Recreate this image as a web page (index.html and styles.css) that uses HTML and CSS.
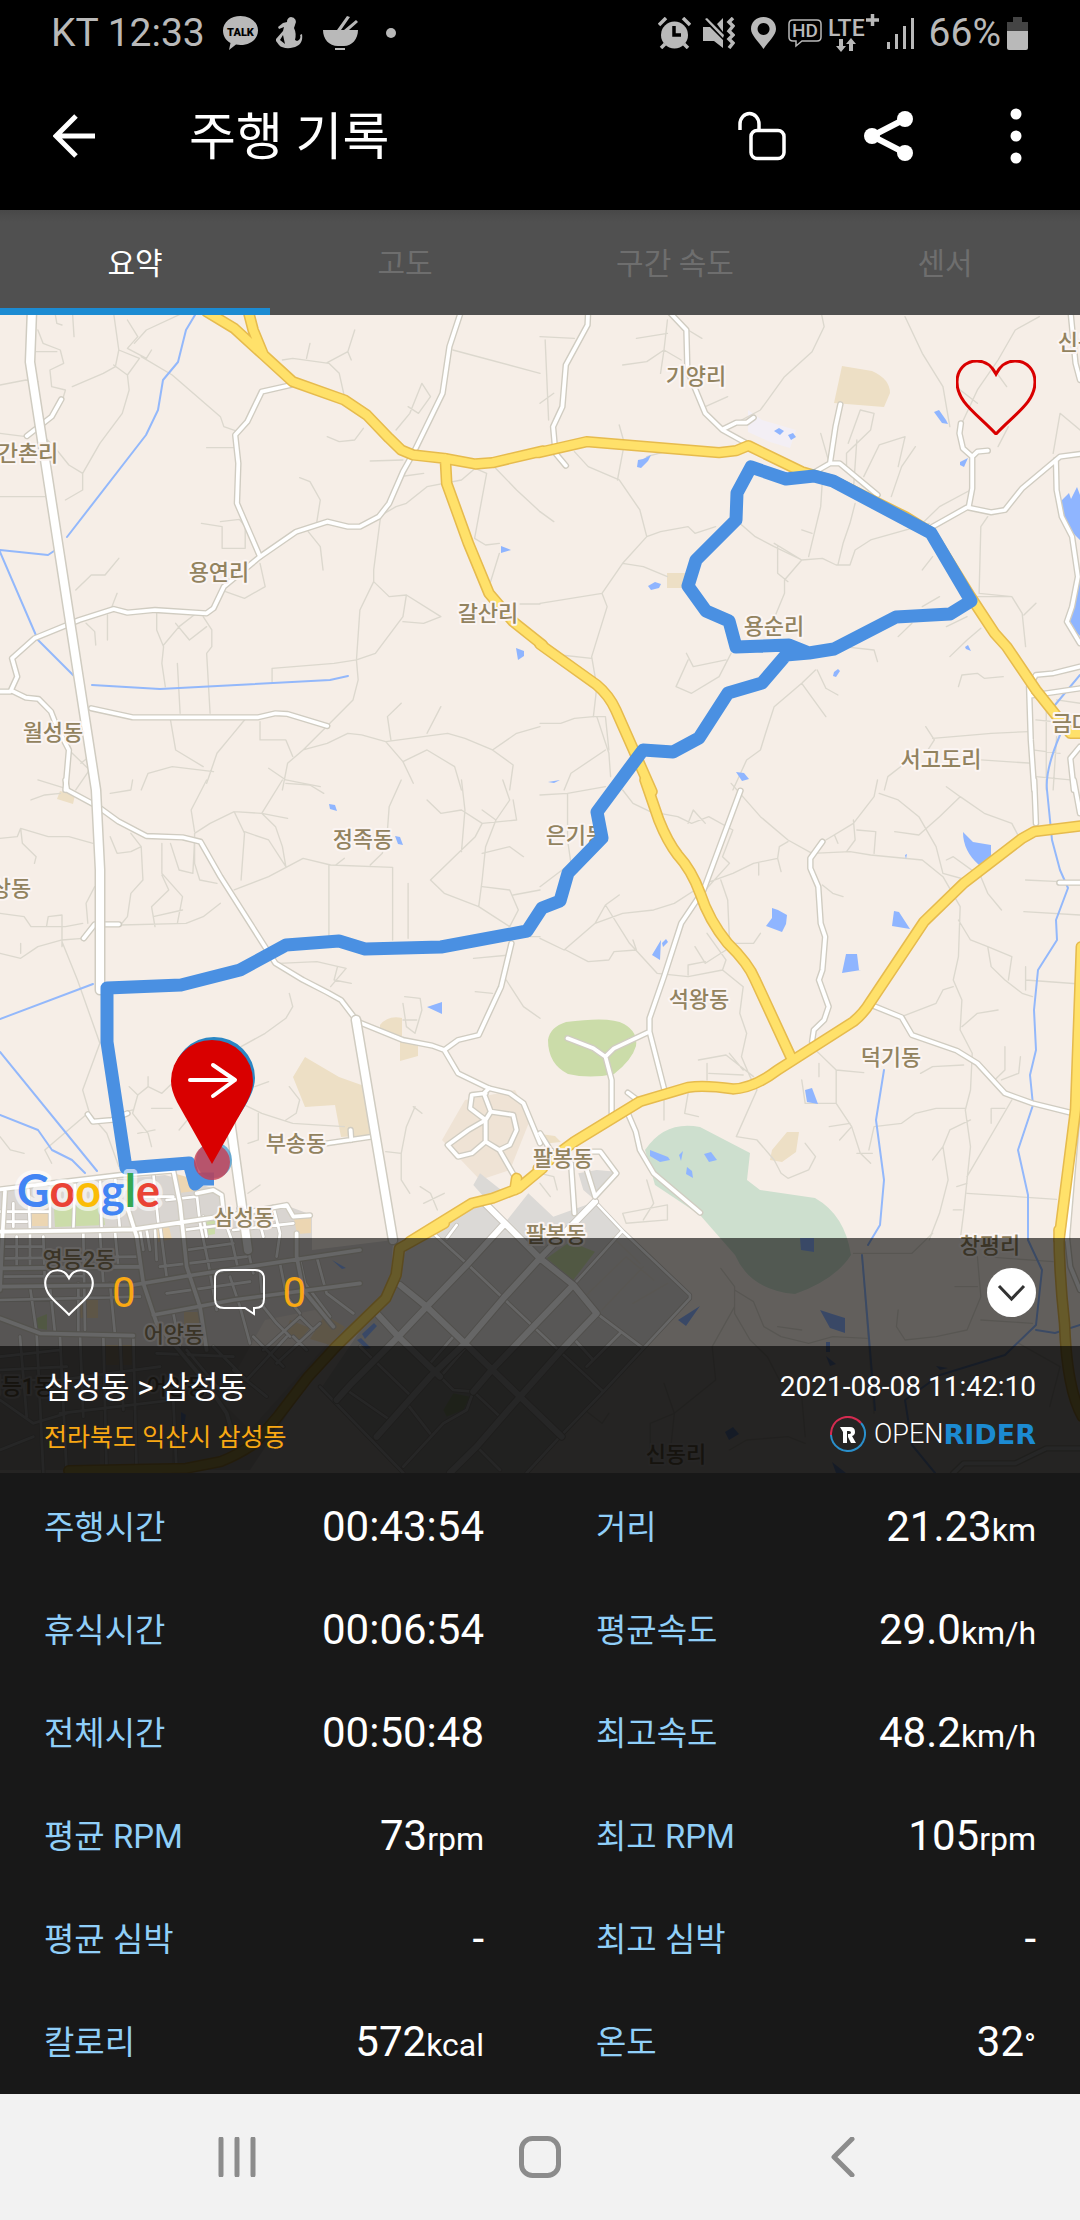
FILE: index.html
```html
<!DOCTYPE html>
<html lang="ko">
  <head>
    <meta charset="UTF-8" />
    <meta name="viewport" content="width=device-width, initial-scale=1.0" />
    <title>주행 기록</title>
    <link rel="stylesheet" href="styles.css">
  </head>
  <body>
    <div class="status-bar">
      <div class="status-left">
        <span class="clock">KT 12:33</span>
        <svg class="icon-talk" width="35" height="34" viewBox="0 0 35 34">
          <path d="M17.500 0C27 0 35 6 35 14.500S27 29 17.500 29L13 28.600 6 34 7.500 27C3 24.500 0 20 0 14.500 0 6 8 0 17.500 0z" />
          <text x="17.500" y="19.500">TALK</text>
        </svg>
        <svg class="icon-rider" width="28" height="32" viewBox="0 0 28 32">
          <path d="M15 0a5 5 0 0 1 4 8l-1 3c2 4 2 8 1 12l2 1c3-1 4-4 3-6l2-1c1 6-1 10-5 12-5 3-15 3-18-1l-3-4v-2l7-8 1-4-5 2-1-2 5-4 4-1A5 5 0 0 1 15 0zM7 18l-3 5 5 4z" />
        </svg>
        <svg class="icon-bowl" width="35" height="34" viewBox="0 0 35 34">
          <path d="M0 14h14L24 0l3 1-9 13h3L33 4l2 2-9 8h9c0 9-6 16-14 16H15C6 30 0 23 0 14zM12 32h10v2H12z" />
        </svg>
        <span class="dot"></span>
      </div>
      <div class="status-right">
        <svg width="33" height="32" viewBox="0 0 33 32">
          <circle cx="16.500" cy="18" r="13.500" />
          <path d="M1 8l7-7M32 8l-7-7M3 31l4-4M30 31l-4-4" class="thick" />
          <path d="M16 9v9h7" class="cut" />
        </svg>
        <svg width="32" height="32" viewBox="0 0 32 32">
          <path d="M0 10h7l13 13v8l-9-7H0zM14 7l6-6v14zM2 2l2-1 17 17-1 3z" />
          <path d="M30 1l-4 4 4 4-4 5 4 4-4 4 4 4-4 5" class="thick" />
        </svg>
        <svg width="25" height="32" viewBox="0 0 25 32">
          <path fill-rule="evenodd" d="M12.500 0C20 0 25 5 25 12 25 18 18 24 12.500 32 7 24 0 18 0 12 0 5 5 0 12.500 0zm0 6a6 6 0 1 0 .1 0z" />
        </svg>
        <svg width="34" height="30" viewBox="0 0 34 30">
          <path d="M5 2h24q4 0 4 4v13q0 4-4 4H14l-6 5v-5H5q-4 0-4-4V6q0-4 4-4z" class="thin" />
          <text x="17" y="19" class="hd">HD</text>
        </svg>
        <svg width="51" height="38" viewBox="0 0 51 38">
          <text x="0" y="22" class="lte">LTE</text>
          <path d="M38 6h13M44.500 0v12" class="thick" />
          <path d="M11 25h4v7h3l-5 6-5-6h3zM21 37h4v-7h3l-5-6-5 6h3z" />
        </svg>
        <svg width="28" height="31" viewBox="0 0 28 31">
          <path d="M0 24h3v7H0zM8 16h3v15H8zM16 8h3v23h-3zM24 0h3v31h-3z" />
        </svg>
        <span class="percent">66%</span>
        <svg width="21" height="33" viewBox="0 0 21 33">
          <path d="M0 5h6V0h9v5h6v9H0z" class="battery-empty" />
          <path d="M0 14h21v17q0 2-2 2H2q-2 0-2-2z" />
        </svg>
      </div>
    </div>

    <header class="toolbar">
      <button class="icon-button back" aria-label="뒤로">
        <svg width="42" height="44" viewBox="0 0 42 44">
          <path d="M42 22H4M23 2L3 22l20 20" />
        </svg>
      </button>
      <h1>주행 기록</h1>
      <button class="icon-button lock" aria-label="공개 설정">
        <svg width="48" height="50" viewBox="0 0 48 50">
          <rect x="13" y="19.500" width="33" height="28" rx="6" />
          <path d="M2 19v-6a9.500 10.500 0 0 1 19 0v6" />
        </svg>
      </button>
      <button class="icon-button share" aria-label="공유">
        <svg width="50" height="50" viewBox="0 0 50 50">
          <path d="M41 8L8 25l33 17" />
          <circle cx="41" cy="8" r="8" />
          <circle cx="8" cy="25" r="8" />
          <circle cx="41" cy="42" r="8" />
        </svg>
      </button>
      <button class="icon-button more" aria-label="더보기">
        <svg width="12" height="56" viewBox="0 0 12 56">
          <circle cx="6" cy="6" r="5.500" />
          <circle cx="6" cy="28" r="5.500" />
          <circle cx="6" cy="50" r="5.500" />
        </svg>
      </button>
    </header>

    <nav class="tabs">
      <button class="tab active">요약</button>
      <button class="tab">고도</button>
      <button class="tab">구간 속도</button>
      <button class="tab">센서</button>
    </nav>

    <main class="map">
      <svg class="map-canvas" viewBox="0 315 1080 1158" preserveAspectRatio="xMidYMid slice">
        <defs>
          <!-- white roads, one group per map tile -->
          <g id="roads">
            <g transform="translate(0 310) scale(.3444 .3333)">
              <path d="M78 378L150 320 178 268M845 225L760 245 718 335 683 375 692 460 688 580 755 740" />
              <path d="M1340 0L1305 110 1285 250 1200 430 1170 485 1130 580 1100 620 1045 650 1010 650 950 635 860 665 755 740 650 830 620 895 600 910 450 900 370 908 330 897 230 930 100 985 35 1045 50 1100 30 1145 0 1145" />
              <path d="M35 1143L75 1163 112 1167 148 1205 165 1250 200 1320 190 1440M265 1195L385 1222 750 1222 800 1210 835 1212 950 1248" />
            </g>
            <g transform="translate(540 310) scale(.3444 .3333)">
              <path d="M140 0L138 45 75 165 65 290 38 350 45 430 75 467M370 0L425 60 428 180 480 310 530 360 600 400M530 358L570 338 600 338 620 323" />
              <path d="M872 283L858 350 842 460 800 485M842 460L870 460 980 555M1222 340L1218 370 1228 415 1255 440 1270 425 1300 422M1255 440L1255 535 1245 590M1140 650L1240 592 1310 607 1350 600 1400 535 1510 440 1568 432M1498 450L1500 540 1515 620 1545 680 1562 800 1545 890 1530 935 1568 1000" />
              <path d="M1568 1070L1490 1090 1440 1095 1420 1130 1425 1290 1435 1440M1425 1157L1568 1135M1568 1310L1540 1345 1550 1440M1540 0L1555 160 1568 210" />
            </g>
            <g transform="translate(0 780) scale(.3444 .3333)">
              <path d="M190 0L195 30 285 80 345 125 425 168 530 172 582 185 640 290 800 550 880 600 950 637 990 660 1038 725 1170 780 1255 797 1290 810 1330 880 1420 925 1480 940 1520 970 1568 1090M1485 490L1455 620 1390 765 1330 780 1290 810" />
              <path d="M345 433L275 433 243 475M255 1003L270 1025 325 1020 370 1000M950 1090L1095 1068M1018 1050L1020 1080M1420 925L1405 940 1425 995M1425 995L1490 1005 1500 1050 1480 1095 1450 1110 1410 1085 1410 1020 1425 995M1410 940L1370 945 1365 985 1410 1020 1360 1050 1300 1095 1330 1130 1370 1120 1410 1085M1450 1110L1500 1200" />
            </g>
            <g transform="translate(540 780) scale(.3444 .3333)">
              <path d="M582 32L475 330 410 430 360 590 318 715 318 755 360 925M318 755L215 805 190 830 155 805 80 775M190 830L208 900 208 1010M820 185L785 235 785 265 808 320 815 430 828 470 820 570 810 600 838 680 825 720 795 750 790 785" />
              <path d="M962 675L1050 712 1080 765 1210 812 1270 850 1350 940 1430 970 1540 998M255 938L280 958M255 1000L278 1055 290 1110 330 1180 465 1298M1435 0L1440 130M1550 0L1568 100M1508 308H1568M0 1060L30 1110 90 1150 100 1300M150 1115H175L222 1180 160 1250M130 1150L160 1250M1560 1010L1530 1380" />
            </g>
            <g transform="translate(540 1230) scale(.3444 .3333)">
              <path d="M1528 0L1540 110 1568 180M1568 655H1470L1380 700 1230 700 1200 730" />
            </g>
          </g>

          <g id="arterials">
            <path d="M32 310L30 362 96 790 100 870V990" />
            <path d="M356 1020L393 1240M230 1120L248 1250" />
          </g>

          <g id="highways">
            <g transform="translate(0 310) scale(.3444 .3333)">
              <path d="M600 5L680 55 765 135 850 215 1000 270 1065 315 1130 385 1165 420 1200 435 1290 445 1380 462 1430 458 1575 423M720 0L735 60 765 135M1293 445L1297 520 1360 700 1420 850 1490 935 1575 1005" />
            </g>
            <g transform="translate(540 310) scale(.3444 .3333)">
              <path d="M-5 428L135 395 520 428 570 422 605 407 760 485 850 512 1060 620 1135 668 1250 860 1320 970 1355 1010 1440 1140 1540 1270H1575M0 1003L165 1125Q200 1155 220 1200L325 1445" />
            </g>
            <g transform="translate(0 780) scale(.3444 .3333)">
              <path d="M1575 1165L1505 1225 1430 1255 1370 1270 1190 1385M1495 1230L1500 1195" />
            </g>
            <g transform="translate(540 780) scale(.3444 .3333)">
              <path d="M305 0L345 120Q370 185 400 225 440 270 465 340 490 420 545 490 605 550 625 600L728 830M-5 1165L100 1085 290 965 430 922Q480 915 560 927 620 925 690 870L910 725Q940 700 960 665L1115 425 1230 310 1400 175 1435 155 1575 137M1572 500L1555 990 1507 1380" />
            </g>
            <g transform="translate(0 1230) scale(.3444 .3333)">
              <path d="M1290 -20L1160 55 1150 135 1120 205 975 350 895 440 810 555 740 640Q690 675 640 695L540 715 200 722" />
            </g>
            <g transform="translate(540 1230) scale(.3444 .3333)">
              <path d="M1507 0Q1507 130 1523 280 1530 480 1575 560" />
            </g>
          </g>

          <g id="city-streets" transform="translate(0 1150) scale(.3333)">
            <path d="M0 185H150M40 160V230M20 215H80M150 120V240M85 115L90 245M225 95L220 240M300 85L305 240M345 80L360 240M0 290H130M0 325L420 320M0 380L250 378M50 260V350M90 250V350M130 260L135 410M250 250L255 540M300 250L310 400M345 245L355 350M235 400V550M90 410L110 550M150 410L165 550M0 450L420 440M330 400L345 555M420 240L430 300M440 240L450 300M465 240L470 330M480 225L500 380M435 140H520M460 70L475 220M500 150L590 140M590 130L600 220 625 340 650 480M550 240L670 225M610 200L620 260M560 300L700 280M480 350L740 320M670 200L695 270 715 360M715 175L735 260 760 370M770 180L790 260M820 170L840 250 830 320M700 240L880 220M500 430L750 395M520 490L540 590M690 380L720 470 750 580M780 370L790 470 830 520 870 560M840 340L860 440 900 490M900 330L915 400 990 500M950 320L980 430 1060 490M790 600L900 500 940 540M830 640L960 520M760 560L850 650M880 560L920 600" />
            <path d="M0 620L180 600M0 660L200 650M0 690H200M60 560L80 800M110 550L130 969M180 560L200 969M240 555L250 800M310 560L320 969M360 560L370 780M180 690L480 650M180 790L520 750M400 560L410 969M470 610L700 620M560 600L660 720M640 590L740 690 860 560M520 750L530 969M0 750L100 820 200 790M700 660L800 740M0 900L100 860" />
          </g>

          <g id="city-roads" transform="translate(0 1150) scale(.3333)">
            <path d="M0 118L360 75 520 62M0 245L240 242 400 238 640 203M0 355L250 352 420 350M0 410L400 405 560 378 1080 300M460 495L700 450 1080 400M0 505L120 550 400 557M395 60L385 180 410 260 430 400 470 520 620 700 680 790 700 860M15 125L8 245 0 420M520 62L540 160 560 350 600 470 620 600M590 130L640 120 665 135 672 200 860 165 880 200 930 196M890 250L890 320 910 420 1000 530" />
          </g>

          <g id="industrial-roads" transform="translate(340 1170) scale(.3333)">
            <path d="M765 95L600 265 490 385 375 520 270 620 110 800M490 165L385 280 260 410 175 500 35 640-10 690M700 345L580 470 455 600 400 665M770 430L660 545 540 680 410 830 330 909M435 100L600 265 700 345 770 430M180 345L260 410 375 520 540 680 665 800M110 430L175 500 300 620" />
          </g>
          <g id="industrial-streets" transform="translate(340 1170) scale(.3333)">
            <path d="M765 95L850 185 1050 375 1050 385 910 535 790 665 660 800 560 909M845 185L700 345M770 430L910 535M280 190L385 285 490 385 580 470 660 545 790 665M300 620L340 660 400 665 480 740M400 665L380 720 310 760 190 890M60 530L215 680M200 700L270 790M-60 650L190 909M840 490L740 590M705 510L760 570M340 500L270 580M380 530L310 610M20 660L150 750M100 570L0 670M410 830L480 900M350 165L320 205" />
          </g>
        </defs>

        <rect class="land" x="0" y="315" width="1080" height="1158" />

        <!-- parks, fields and built-up blocks -->
        <path class="park" d="M548 1040q2-13 18-18 45-6 58 2 14 8 12 22-4 14-22 28-24 5-46 0-20-10-20-34z" />
        <path class="forest" d="M645 1150Q665 1120 700 1127L750 1153 747 1180 760 1190 815 1198Q845 1215 851 1255 835 1280 795 1294 750 1290 735 1255L700 1215 655 1185z" />
        <path class="field" d="M842 366l30 5q18 8 18 22l-6 14-50-4zM667 573h18v15h-18zM60 791l15 4-2 9-16-5zM380 1025q8-10 22-7v22l16 6v10l-18 5v-22l-20-6zM305 1057l34 20 28 10 4 48-30 2-6-32-30 2-12-30z" />
        <path class="field pale" d="M465 1100l50-10 15 30-20 50-30 10-38-40z" />
        <path class="field" d="M772 1150l15-18h12l-3 20-14 10-12-2zM540 1134l15 2 6 6-20 2z" />
        <path class="campus" d="M748 410l14 10 34 10-6 18-20-6-22-10z" />
        <path class="city" d="M0 1190L165 1175 220 1190 228 1215 285 1205 312 1215 312 1250 393 1240 390 1300 310 1380 250 1470H0z" />
        <path class="city-land" d="M265 1320l50-10 25 20-90 100-30-30zM100 1410h72v60h-72z" />
        <path class="city-field" d="M32 1213h18v13H32zM176 1174l15 4 4 13-16 2zM157 1228l12-1 3 12-14 3zM294 1219l17-4v18l-14 1zM80 1298h18v20H80zM184 1312h15v22h-15zM105 1345h27v20h-27zM290 1320l20 8-10 12-15-6zM325 1315l20 12-15 18-20-6z" />
        <path class="park" d="M54 1209l48-8 3 24-50 2zM203 1222l12-3v15l-11 2zM37 1318l10-4v16l-11-2z" />
        <g transform="translate(340 1170) scale(.3333)">
          <path class="industry" d="M430 105L490 165 565 70 640 140 765 95 850 185 1050 380 560 909H190L-60 660 150 350 200 240 370 110zM400 45L420 10 490 65 440 90zM715 10L770 0 830 5 765 90 730 60z" />
          <path class="park" d="M620 265L690 215 765 245 700 330zM310 720L340 670 390 680 370 720 320 740z" />
        </g>

        <!-- lanes -->
        <g class="lanes">
          <g transform="translate(0 310) scale(.3444 .3333)">
            <path d="M110 60L125 100 175 120 185 160 145 180 150 230 190 240 180 275M105 125H165M160 10L165 40 180 45M210 0L215 80M330 10L345 120 335 170 300 190 210 230M370 30L400 80 370 115 425 145 440 120M390 100L425 60 550 0M345 120L405 145 370 195 375 240 355 310 290 400 240 490 240 540 190 570M410 140L500 195 640 320 650 350 683 362M0 225L75 210 110 215M0 370L75 380M0 560L135 560M120 370L165 420 200 465 240 490M330 165L370 195M820 150L850 145 955 160 985 190 1000 260M890 145L900 100M950 158L1010 125 1030 60M1010 125L1020 150M1315 120L1568 190M950 380L985 395 1030 390 1055 355M1075 453L1170 450M1175 498L1230 490M1150 360L1190 310 1225 220 1250 260 1215 310 1185 290M870 503L900 515 930 570 920 635" />
            <path d="M600 413H680M220 840L265 795 305 795 345 745M640 635L695 628 712 650V715H645V650L585 640M755 760L770 830 710 865 655 845M895 665L930 710 938 780M250 940L275 965 278 1005M312 915V990M340 850L325 890M455 910V960L475 1010 470 1060 480 1130M475 1005L520 950 570 910M590 920L615 960V1010L600 1030 610 1210M515 1060L523 1210M510 940L550 990 600 950M1105 620L1085 780 1085 815 1045 900 1035 1050 1040 1110 1025 1170 950 1248 880 1320 835 1360 820 1440M1085 815L1130 860 1180 855 1280 920 1230 940 1170 935M1180 855L1170 920 1090 1030 1035 1050 970 1060 790 1075V1120M1100 620L1150 590 1180 580 1240 530 1340 510 1380 475 1413 490 1378 685 1410 705 1450 700M1430 465L1500 540 1568 605M1450 730L1420 830M1510 882H1568M880 1320L950 1300 1010 1270 1050 1275 1120 1295 1300 1270 1350 1285 1430 1320 1500 1270 1568 1250M1120 1295L1170 1355 1200 1420M1135 1290L1125 1220 1165 1180M1240 1270L1280 1190M1170 1355L1240 1320 1320 1370 1340 1440M1430 1320L1490 1365 1480 1440M495 1230L510 1320 590 1370M710 1230L670 1280 630 1330 600 1420M410 1440L430 1390 500 1370 620 1385M755 1235V1290H830L850 1340M200 1320L260 1380 220 1440M235 1360L265 1335M110 1410L190 1435M780 1375L830 1410 930 1430" />
          </g>
          <g transform="translate(540 310) scale(.3444 .3333)">
            <path d="M0 80L100 85M15 90L25 330M0 280L40 250M370 30L360 120 350 190M280 85L370 70M240 165L310 155 360 120 410 150M430 60L470 85M480 290L545 260M540 355L640 300 710 200 790 125 825 50 815 0M1060 20L1110 130 1170 230 1190 350M1450 20L1380 60 1330 150 1270 240 1225 340M1220 240L1270 280M1320 180L1355 230M100 425L140 470 230 510 290 600 310 680 240 760 180 850 0 880M230 345L245 400 225 510M310 680L350 665 430 650 450 670 510 650M240 760L300 770 370 800M180 850L195 890 150 1040 165 1130 155 1220 190 1220 200 1320M0 605L40 635M60 1035L150 1045M310 440L380 420M840 460L815 370M895 400L930 300 970 310 960 360 890 430 890 480M910 540L920 390M940 500L985 405 1060 380 1040 470M1020 560L1050 470 1090 410M820 510L815 590 780 740M580 640L625 680 680 710 760 750 820 745 860 765 900 765 915 720 960 690 1130 640M915 580L900 640 880 700 865 765M680 700L760 750 710 810 710 850 680 925M690 710V790L720 815M760 660L790 670M1250 540L1160 590 1100 650M1360 350L1330 410M1490 430L1510 310 1568 360M1300 620L1280 650 1275 850 1370 860M1140 740L1110 780M1270 860L1370 860 1400 910 1410 1010M1405 915L1440 880M1240 920L1180 950M1280 955L1240 990 1190 1040M1160 860L1110 890M1040 980L1080 940" />
            <path d="M425 1030L445 1070 540 1050M555 1030L520 1100 440 1150 395 1130 430 1050M880 1010L970 1020 980 1055M800 1080L760 1120 680 1190 655 1270 640 1320 600 1350 560 1440M805 1080L830 1135 865 1155M760 1120L830 1220M0 1240L60 1240 100 1225 155 1220M165 1220L200 1330 205 1400M70 1440L90 1390 190 1320M1215 1130L1225 1095 1270 1090 1290 1105 1345 1100M1120 1250L1145 1290 1120 1330M1140 1285L1260 1275 1310 1270 1420 1265M1280 1350L1430 1360M1000 1440L1010 1400 1060 1360M1470 1160V1440M1500 1170L1568 1180M1440 1230L1540 1240M1430 1320L1510 1330M1500 1280L1490 1440M1440 1400L1540 1410" />
          </g>
          <g transform="translate(0 780) scale(.3444 .3333)">
            <path d="M90 60L130 45 175 40M320 40L380 30 385 0M600 0L555 90 565 155M820 0L760 100 835 115M830 10L900 15 940 40M0 175L50 170 60 145 140 170 200 170 270 190M60 145L65 190 105 230 100 250M565 160L610 130 680 95 760 100 800 140 820 200 830 260M680 95L710 160 700 300M565 160V250L580 300 630 310M710 155L780 180 830 260M320 170L340 220 380 215 410 200 380 160M410 200L415 300 380 340 370 410 350 435M470 190V280L530 350 515 430M495 190L520 270 560 280 565 180M470 285L490 330 440 380 450 440M445 410L530 390M680 330L780 290 880 235 960 255 1140 262V480M955 255V480M1185 310V475M975 255L1000 235M1075 255L1110 220 1125 150 1130 80 1165 0M640 370L590 410 540 430 350 435M0 400L70 410 90 440 190 440 240 430M275 320L250 370 255 430M135 440L140 410 180 405V500M0 520L60 535 110 500 180 480 240 475M180 485L225 600 290 790 240 930 260 1000 310 1060 345 1160M60 490V520M810 550L920 545 1005 565 960 620M980 560L970 600 1020 610M840 640L850 680 830 715 770 760 700 800M1175 650L1220 655 1225 690 1205 760 1180 740 1170 670M1170 720H1210M1375 535L1480 525M1470 600L1520 680 1568 715M1380 635L1430 640M1240 60L1280 100 1340 90 1400 130 1380 170 1330 220 1250 300 1290 340 1390 380 1480 440M1340 0L1350 90 1340 215M1400 90L1440 120 1410 200 1400 300 1390 380M1460 0L1480 60 1440 120M1400 220L1480 200 1520 230M1480 440L1505 390 1480 330 1400 320M1490 345L1568 330M1400 130L1500 120 1490 60M1530 470H1568" />
            <path d="M375 920L400 945 430 920 430 890M400 945L385 1000 430 1060 440 1100M430 920L470 940 500 910M440 985H500M350 1000L385 990M400 1060L450 1050M520 1050L560 1000M700 970L760 1000 850 1030 1000 1040M840 920L870 960 860 1000 830 1020M750 1000V1080L720 1090M740 920L780 905M1200 980L1225 1000M1205 980L1180 1040 1165 1120 1120 1115M1165 1120V1200L1190 1240M0 1070L30 1110 70 1120M255 1000L130 1110 150 1150M720 1240L755 1215M1220 1220L1250 1240 1270 1290M1230 1270L1290 1240" />
          </g>
          <g transform="translate(540 780) scale(.3444 .3333)">
            <path d="M0 45L80 40 190 20M80 40V180L90 250 0 320M240 30L270 70 320 95 400 110 440 130 490 110 560 150 530 230 550 250 480 330M430 130L445 90 480 130M555 10L640 110 720 180 790 220 900 215 960 225 1110 240 1170 290 1220 380 1215 530 1200 600 1225 660 1220 750 1255 820 1250 930 1235 990 1250 1100 1230 1300 1220 1380M480 310L560 280 620 250 690 235 695 200 720 185M635 250V285M690 235L700 275M820 315L850 340 880 350M830 180L910 130 970 50 980 0M855 165L865 190M910 120L915 180 890 215M920 150L975 155 970 220M985 40L1040 60 1100 110 1150 200 1170 280M1030 155L1100 165 1160 110 1220 50M1220 50L1290 100 1370 130 1390 170M1180 20L1220 50M1180 240L1200 230 1280 290 1300 340 1340 390M1170 280L1240 300M190 375L160 430 70 510 0 475M160 430L240 400 330 390 390 370 450 330M190 375L260 490 340 580 430 590 530 570 590 620M190 375L230 345M75 510L140 545 200 540 215 515 280 510 270 480M430 585L430 555 480 545M485 460L540 540 530 570M450 500L480 550 540 510M525 300L545 360 550 480M560 490L620 490 640 460M590 620L580 700 600 760 585 830 610 890 630 930 570 1070 630 1080 680 1140 700 1180 720 1195 780 1170 800 1130 770 1090M460 840L540 825 620 890M550 820L590 870M485 850V900M490 880L590 885M360 940V1020M430 940L420 1000 460 1010M790 800L860 870 860 970 905 1040 930 1120 960 1150M860 870L940 878M810 850V890M760 900L770 970H860M905 1040L870 1080M840 1040L900 1030M920 1120H965M955 1110L970 1040 1050 1030 1090 1000 1150 985 1235 985M1050 710L1150 670 1170 630 1200 620M1105 880L1140 860 1230 855M1225 740L1270 700 1330 690M1215 420L1250 480 1300 500 1370 530 1360 600M1300 500L1310 560 1350 600 1400 640 1430 650M1410 560V630M1410 600L1568 612M1405 395L1568 405M1410 300L1510 305M1350 800V870L1320 900M1395 830L1390 880 1340 900M1370 960L1240 1190M1350 985H1310V1030M1250 1020L1190 1050 1170 1100 1140 1140M1170 1100L1185 1200 1160 1300 1130 1380M1240 1240L1500 1258M1210 1220L1240 1210M1200 1290L1225 1290M240 1300L370 1275V1320L250 1330zM310 1200L330 1270 300 1320M0 1180L40 1190 50 1230M0 1210L30 1250" />
          </g>
          <g transform="translate(540 1230) scale(.3444 .3333)">
            <path d="M525 115L565 170 565 250 610 330 660 380 700 460 760 500 770 620M565 230L500 350 510 450 390 550 380 650M565 180L620 215 650 290 700 320 780 340 850 320 950 325M690 290L760 300M910 70H1080L1140 10M935 80L970 550M1040 240L1035 290 1060 330 1150 320 1240 300 1280 200 1270 80M1280 270L1430 280M1205 170H1270M1390 340L1510 410 1480 530M1290 80L1490 95M360 460L390 550 320 580V700M550 660L600 630 720 620 770 640M130 540L180 580 200 550M130 200L250 80 330 150M180 240L300 110M270 220L370 160M210 20L290 100" />
          </g>
        </g>

        <!-- streams and ponds -->
        <g class="streams">
          <path d="M195 315L186 330 178 362 163 380 158 410 146 435 67 537M0 550L48 555 57 549M0 552L38 640 78 680M92 685L160 689 330 680 348 676M0 1019L93 984M0 1052L97 1171M0 1115L38 1130 52 1150 72 1160 85 1173M1080 675L1055 705M1060 735Q1045 770 1047 790L1052 840 1060 870 1068 888 1056 920 1057 940 1038 970 1034 1010 1036 1050 1030 1075 1033 1105 1018 1150 1028 1195V1240L1042 1270 1036 1325 1005 1355 940 1375 905 1400 912 1445 935 1473M884 1070L876 1120 884 1180 880 1225 868 1245M862 1255L870 1350 875 1410M1036 1330L1055 1333 1080 1325" />
        </g>
        <path class="water" d="M1062 500l7-7 2 6 6-12 3 8v45l-12-12-8-16zM1068 625l12-45v56zM934 412l5-2 7 10 2 4-6-1zM774 431l5-3 5 3-4 4zM788 435l5-2 3 4-5 3zM638 460l5-1 8-4-3 6-7 7-4-1zM960 462l8-4-4 9-4-2zM648 586l7-4 6 2-2 4-8 2zM834 672l4-3 2 2-4 6-3-1zM965 647l3-2 3 6-5-2zM501 546l10 4-10 3zM516 648l8 3v5l-6 4zM329 804l6 1 2 6-7-2zM395 836l5 1 3 8-5-1zM427 1007l15-5v12zM548 782l12-2-6 3zM736 772l8 1 5 6-7 2zM963 832l10 10 18 3v13l-12 7q-16-14-16-33zM894 911l5 1 11 17-18-3zM846 954h11l2 16h2l-19 3zM772 908l6 2 9 5-1 9-4 8-16-6 6-8zM652 955l9-15-1 20zM662 943l4-4 2 3-5 5zM905 855l2-1-1 5zM805 1090l7-2 6 16-11-2zM650 1150l18 7 2 3-10 2-10-6zM679 1155l4-4-2 10zM704 1154l7-2 6 8-8 2zM687 1167l5 4 1 7-7-4zM800 1238h14v14l-13-2zM820 1310q12 4 25 8v15l-15-5zM678 1320l22-14-14 20zM826 1342h4v10h-4zM826 1356l10 8-6 2zM725 1432l8-5 6 7-10 6zM832 1462l14 11h-10zM362 1334l12-11 3 3-12 13zM357 1340l4-2 10 10-5 1zM332 1260l14 8-4 1zM181 1412l5 3-2 10-3-2zM936 1366l12 2-8 2z" />

        <use href="#city-streets" class="street-casing" />
        <use href="#city-streets" class="street-line" />
        <use href="#industrial-streets" class="street-casing" />
        <use href="#industrial-streets" class="street-line" />
        <use href="#city-roads" class="road-casing" />
        <use href="#city-roads" class="road-line" />
        <use href="#industrial-roads" class="avenue-casing" />
        <use href="#industrial-roads" class="avenue-line" />
        <use href="#roads" class="road-casing" />
        <use href="#roads" class="road-line" />
        <use href="#arterials" class="arterial-casing" />
        <use href="#arterials" class="arterial-line" />
        <use href="#highways" class="highway-casing" />
        <use href="#highways" class="highway-line" />

        <g class="places">
          <text x="28" y="461">간촌리</text>
          <text x="219" y="580">용연리</text>
          <text x="488" y="621">갈산리</text>
          <text x="53" y="740">월성동</text>
          <text x="696" y="384">기양리</text>
          <text x="1088" y="350">신용리</text>
          <text x="774" y="634">용순리</text>
          <text x="1082" y="731">금마면</text>
          <text x="941" y="767">서고도리</text>
          <text x="363" y="847">정족동</text>
          <text x="11" y="896">상동</text>
          <text x="576" y="843">은기동</text>
          <text x="699" y="1007">석왕동</text>
          <text x="891" y="1065">덕기동</text>
          <text x="563" y="1166">팔봉동</text>
          <text x="556" y="1242">팔봉동</text>
          <text x="296" y="1151">부송동</text>
          <text x="244" y="1225">삼성동</text>
          <text x="79" y="1267">영등2동</text>
          <text x="174" y="1342">어양동</text>
          <text x="18" y="1394">영등1동</text>
          <text x="177" y="1394">어양동</text>
          <text x="990" y="1253">창평리</text>
          <text x="676" y="1462">신동리</text>
        </g>

        <path class="route" d="M809 653L789 645 736 647 729 621 706 611 688 586 696 560 736 520 737 493 751 467 786 479 814 476 833 481 931 533 971 601 950 614 896 617 834 649 809 653 786 655 762 683 728 693 699 738 673 752 643 750 597 812 602 838 568 873 560 901 542 908 527 931 441 947 365 949 339 941 286 945 240 970 181 985 107 988V1042L126 1168 189 1163 195 1184 201 1179H214" />

        <circle class="spot-start" cx="214" cy="1160" r="18" />
        <circle class="spot-end" cx="212" cy="1162" r="18" />
        <path class="pin-start" d="M214 1161C204 1130 173 1102 173 1078a41 41 0 0 1 82 0C255 1102 224 1130 214 1161z" />
        <path class="pin-end" d="M212 1164L177 1102Q171 1090 171 1081a41 41 0 0 1 82 0Q253 1090 247 1102z" />
        <path class="pin-arrow" d="M190 1080H234M213 1065L235 1080 213 1096" />

        <text class="google" x="17" y="1207"><tspan class="blue">G</tspan><tspan class="red">o</tspan><tspan class="yellow">o</tspan><tspan class="blue">g</tspan><tspan class="green">l</tspan><tspan class="red">e</tspan></text>
      </svg>

      <button class="icon-button favorite" aria-label="즐겨찾기">
        <svg width="80" height="75" viewBox="0 0 80 75">
          <path d="M40 14C35 4 28 1 21 1 9 1 1 10 1 22 1 42 20 53 40 74 60 53 79 42 79 22 79 10 71 1 59 1 52 1 45 4 40 14z" />
        </svg>
      </button>

      <div class="social">
        <button class="icon-button count like">
          <svg width="50" height="47" viewBox="-1 -1 82 77">
            <path d="M40 14C35 4 28 1 21 1 9 1 1 10 1 22 1 42 20 53 40 74 60 53 79 42 79 22 79 10 71 1 59 1 52 1 45 4 40 14z" />
          </svg>
          <span>0</span>
        </button>
        <button class="icon-button count comment">
          <svg width="51" height="47" viewBox="0 0 51 47">
            <path d="M10 1H41Q50 1 50 10V30Q50 39 41 39H40V45L31 39H10Q1 39 1 30V10Q1 1 10 1z" />
          </svg>
          <span>0</span>
        </button>
        <button class="icon-button collapse" aria-label="접기">
          <svg width="49" height="49" viewBox="0 0 49 49">
            <circle cx="24.500" cy="24.500" r="24.500" />
            <path d="M12 18L24.500 31 37 18" />
          </svg>
        </button>
      </div>

      <div class="ride-info">
        <div class="ride-title">
          <p class="course">삼성동 &gt; 삼성동</p>
          <p class="address">전라북도 익산시 삼성동</p>
        </div>
        <div class="ride-meta">
          <time class="date" datetime="2021-08-08T11:42:10">2021-08-08 11:42:10</time>
          <div class="brand">
            <svg width="36" height="36" viewBox="0 0 36 36">
              <path class="ring-blue" d="M31 7A17 17 0 1 1 1 19" />
              <path class="ring-red" d="M1 19A17 17 0 0 1 31 7" />
              <path class="mark" d="M10 11H20Q25 11 25 16 25 19 22 20L26 27H21L18 21V18H19Q21 18 21 16.500 21 15 19 15H17V27H13V16z" />
            </svg>
            <span class="brand-open">OPEN</span><span class="brand-rider">RIDER</span>
          </div>
        </div>
      </div>
    </main>

    <dl class="stats">
      <div><dt>주행시간</dt><dd>00:43:54</dd></div>
      <div><dt>거리</dt><dd>21.23<small>km</small></dd></div>
      <div><dt>휴식시간</dt><dd>00:06:54</dd></div>
      <div><dt>평균속도</dt><dd>29.0<small>km/h</small></dd></div>
      <div><dt>전체시간</dt><dd>00:50:48</dd></div>
      <div><dt>최고속도</dt><dd>48.2<small>km/h</small></dd></div>
      <div><dt>평균 RPM</dt><dd>73<small>rpm</small></dd></div>
      <div><dt>최고 RPM</dt><dd>105<small>rpm</small></dd></div>
      <div><dt>평균 심박</dt><dd>-</dd></div>
      <div><dt>최고 심박</dt><dd>-</dd></div>
      <div><dt>칼로리</dt><dd>572<small>kcal</small></dd></div>
      <div><dt>온도</dt><dd>32<small>°</small></dd></div>
    </dl>

    <footer class="system-nav">
      <button class="icon-button" aria-label="최근 앱">
        <svg width="38" height="40" viewBox="0 0 38 40">
          <path d="M3 2V38M19 2V38M35 2V38" />
        </svg>
      </button>
      <button class="icon-button" aria-label="홈">
        <svg width="42" height="42" viewBox="0 0 42 42">
          <rect x="2.500" y="2.500" width="37" height="37" rx="11" />
        </svg>
      </button>
      <button class="icon-button" aria-label="이전">
        <svg width="24" height="40" viewBox="0 0 24 40">
          <path d="M21 2L3 20 21 38" />
        </svg>
      </button>
    </footer>
  </body>
</html>
```
FILE: styles.css
```css
* {
  box-sizing: border-box;
}
body {
  display: flex;
  flex-direction: column;
  min-height: 100vh;
  margin: 0;
  background-color: #181818;
  color: white;
  font-family: Roboto, "Noto Sans CJK KR", sans-serif;
}
svg {
  display: block;
  flex-shrink: 0;
}
button {
  font-family: inherit;
  cursor: pointer;
}
.icon-button {
  display: flex;
  align-items: center;
  justify-content: center;
  padding: 0;
  border: none;
  background: none;
  color: white;
}

/* phone status bar */
.status-bar {
  display: flex;
  align-items: center;
  justify-content: space-between;
  height: 66px;
  padding: 0 52px 0 51px;
  background-color: black;
  color: #b9b9b9;
  font-size: 39px;
  line-height: 46px;
}
.status-bar svg {
  fill: #b9b9b9;
}
.status-left {
  display: flex;
  align-items: center;
}
.icon-talk {
  margin-left: 18px;
}
.status-bar .icon-talk text {
  fill: black;
  font-size: 11px;
  font-weight: 900;
  text-anchor: middle;
}
.icon-rider {
  margin-left: 18px;
}
.icon-bowl {
  margin-left: 19px;
}
.dot {
  width: 10px;
  height: 10px;
  margin-left: 28px;
  border-radius: 50%;
  background-color: #b9b9b9;
}
.status-right {
  display: flex;
  align-items: center;
  gap: 12px;
}
.status-right .thick {
  fill: none;
  stroke: #b9b9b9;
  stroke-width: 3.5;
}
.status-right .thin {
  fill: none;
  stroke: #b9b9b9;
  stroke-width: 1.5;
}
.status-right .cut {
  fill: none;
  stroke: black;
  stroke-width: 3.5;
}
.hd {
  font-size: 19px;
  font-weight: 500;
  text-anchor: middle;
}
.lte {
  font-size: 23px;
  font-weight: 500;
}
.status-right svg:nth-of-type(3) {
  margin-left: 4px;
}
.status-right svg:nth-of-type(5) {
  margin: 0 -4px 0 -6px;
}
.status-right .battery-empty {
  fill: #444;
}
.percent {
  margin: 0 -6px 0 2px;
}

/* title bar */
.toolbar {
  display: flex;
  align-items: center;
  height: 144px;
  padding: 0 58px 4px 53px;
  background-color: black;
}
.toolbar h1 {
  flex: 1;
  margin: 0 0 0 94px;
  padding-top: 4px;
  font-size: 51px;
  font-weight: 400;
  line-height: 60px;
}
.back svg,
.lock svg {
  fill: none;
  stroke: white;
  stroke-width: 5;
}
.lock svg {
  stroke-width: 3.5;
}
.share {
  margin-left: 78px;
}
.share svg {
  fill: white;
  stroke: white;
}
.share path {
  fill: none;
  stroke-width: 6;
}
.share circle {
  stroke: none;
}
.more {
  margin-left: 96px;
}
.more svg {
  fill: white;
}

/* tabs */
.tabs {
  display: flex;
  height: 105px;
  background: linear-gradient(#484848, #505050 12px);
}
.tab {
  flex: 1;
  padding: 4px 0 0;
  border: none;
  border-bottom: 7px solid transparent;
  background: none;
  color: #6e6e6e;
  font-size: 30px;
}
.tab.active {
  border-bottom-color: #1c8bd2;
  color: white;
}

/* map */
.map {
  position: relative;
  display: flex;
  flex: 1 0 auto;
  flex-direction: column;
  justify-content: flex-end;
  min-height: 600px;
  overflow: hidden;
}
.map-canvas {
  position: absolute;
  inset: 0;
  width: 100%;
  height: 100%;
  fill: none;
  stroke-linejoin: round;
  stroke-linecap: round;
}
.land {
  fill: #f6eee7;
}
.park {
  fill: #cbdca9;
}
.forest {
  fill: #cddfce;
}
.field {
  fill: #eddfc5;
}
.field.pale {
  fill: #efe3d5;
}
.campus {
  fill: #f3eff5;
}
.city {
  fill: #d9d5d1;
}
.city-land {
  fill: #e9e0d9;
}
.city-field {
  fill: #ecd6b2;
}
.industry {
  fill: #dbd9d6;
}
.water {
  fill: #8fb5ff;
}
.streams {
  stroke: #93b8fb;
  stroke-width: 2;
}
.lanes {
  stroke: #dcd8ce;
  stroke-width: 4;
}
.street-casing {
  stroke: #c9c5bd;
  stroke-width: 13;
}
.street-line {
  stroke: white;
  stroke-width: 8;
}
.road-casing {
  stroke: #d0ccc1;
  stroke-width: 19;
}
.road-line {
  stroke: white;
  stroke-width: 11;
}
.avenue-casing {
  stroke: #c9c5bd;
  stroke-width: 24;
}
.avenue-line {
  stroke: white;
  stroke-width: 18;
}
.arterial-casing {
  stroke: #d0ccc1;
  stroke-width: 11;
}
.arterial-line {
  stroke: white;
  stroke-width: 8;
}
.highway-casing {
  stroke: #e6bb4e;
  stroke-width: 34;
}
.highway-line {
  stroke: #ffe16a;
  stroke-width: 25;
}
.places {
  fill: #92835f;
  stroke: #fbf5f3;
  stroke-width: 4;
  paint-order: stroke;
  font-size: 22px;
  font-weight: 500;
  text-anchor: middle;
}
.route {
  stroke: #4a90e2;
  stroke-width: 13;
  stroke-linejoin: round;
  stroke-linecap: butt;
}
.spot-start {
  fill: rgba(28, 139, 210, 0.6);
}
.spot-end {
  fill: rgba(200, 60, 80, 0.8);
}
.pin-start {
  fill: #2a86c4;
}
.pin-end {
  fill: #d90000;
}
.pin-arrow {
  stroke: white;
  stroke-width: 4;
}
.google {
  stroke: rgba(255, 255, 255, 0.6);
  stroke-width: 8;
  paint-order: stroke;
  font-family: Lato, sans-serif;
  font-size: 45px;
  font-weight: 700;
}
.google .blue {
  fill: #4285f4;
}
.google .red {
  fill: #ea4335;
}
.google .yellow {
  fill: #fbbc05;
}
.google .green {
  fill: #34a853;
}
.favorite {
  position: absolute;
  top: 45px;
  right: 44px;
}
.favorite svg {
  fill: none;
  stroke: #d90000;
  stroke-width: 3;
}

/* likes and comments */
.social {
  position: relative;
  display: flex;
  align-items: center;
  height: 108px;
  padding: 0 44px;
  background-color: rgba(0, 0, 0, 0.6);
}
.count {
  gap: 18px;
  color: #f9a813;
  font-size: 42px;
}
.count svg {
  fill: none;
  stroke: white;
  stroke-width: 2;
}
.like svg {
  stroke-width: 3.5;
}
.comment {
  margin-left: 78px;
}
.collapse {
  margin-left: auto;
}
.collapse circle {
  fill: white;
}
.collapse path {
  fill: none;
  stroke: #333;
  stroke-width: 3;
}

/* ride title and date */
.ride-info {
  position: relative;
  display: flex;
  justify-content: space-between;
  height: 127px;
  padding: 18px 44px 0;
  background-color: rgba(0, 0, 0, 0.85);
}
.ride-info p {
  margin: 0;
}
.course {
  font-size: 31px;
  line-height: 48px;
}
.address {
  color: #f9a813;
  font-size: 25px;
  line-height: 52px;
}
.ride-meta {
  display: flex;
  flex-direction: column;
  align-items: flex-end;
}
.date {
  font-size: 28px;
  line-height: 46px;
}
.brand {
  display: flex;
  align-items: center;
  height: 48px;
  font-size: 27px;
}
.brand svg {
  margin-right: 8px;
  fill: none;
  stroke-width: 2;
}
.ring-blue {
  stroke: #2a8fcb;
}
.ring-red {
  stroke: #d42b50;
}
.mark {
  fill: white;
}
.brand-open {
  font-weight: 300;
}
.brand-rider {
  color: #1c8bd2;
  font-family: "DejaVu Sans", sans-serif;
  font-weight: 700;
}

/* numbers */
.stats {
  display: grid;
  grid-template-columns: 1fr 1fr;
  column-gap: 112px;
  margin: 0;
  padding: 2px 44px 1px;
}
.stats div {
  display: flex;
  align-items: center;
  justify-content: space-between;
  min-height: 103px;
}
.stats dt {
  padding-bottom: 4px;
  color: #90cff8;
  font-size: 33px;
}
.stats dd {
  margin: 0;
  font-size: 42px;
}
.stats small {
  font-size: 32px;
}

/* phone navigation keys */
.system-nav {
  display: flex;
  height: 126px;
  padding: 0 86px;
  background-color: #f2f2f2;
}
.system-nav button {
  flex: 1;
}
.system-nav svg {
  fill: none;
  stroke: #8c8c8c;
  stroke-width: 5;
  stroke-linecap: round;
  stroke-linejoin: round;
}
```
